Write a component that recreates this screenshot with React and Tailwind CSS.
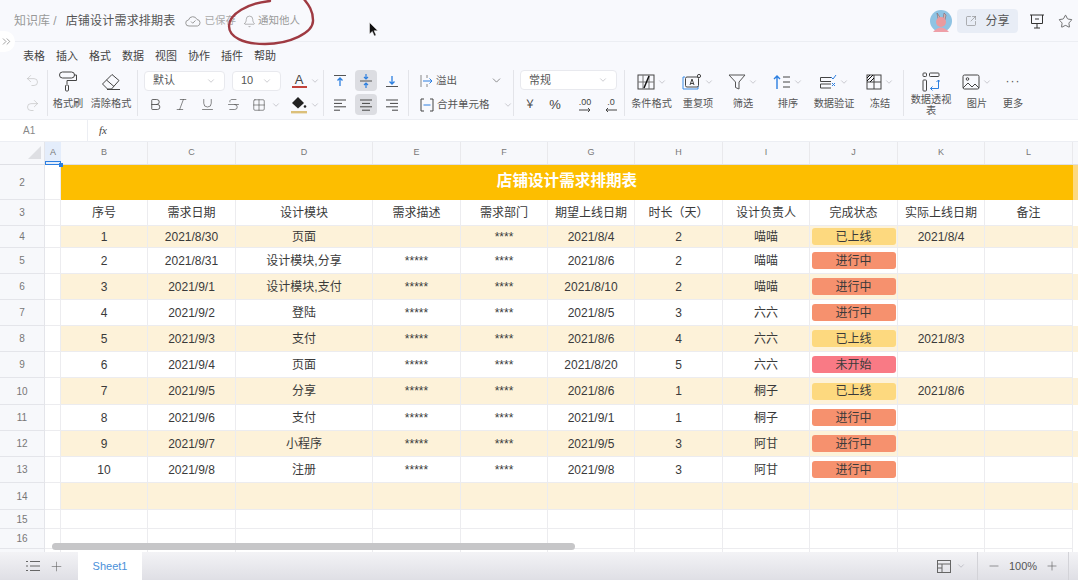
import React from "react";
import { Undo2, Redo2, Bold, Italic, Underline, Strikethrough, Grid2x2, ChevronDown, Bell, Star, Plus, Minus, ChevronsRight, SquareArrowOutUpRight } from "lucide-react";

const FONT = "[font-family:Liberation_Sans,Noto_Sans_CJK_SC,sans-serif]";
const GRID = "grid grid-cols-[45px_16px_87px_88px_137px_88px_87px_87px_88px_87px_88px_87px_88px_5px]";

const rows = [
  [4, 226, "1", "2021/8/30", "页面", "", "****", "2021/8/4", "2", "喵喵", "已上线", "2021/8/4"],
  [5, 248, "2", "2021/8/31", "设计模块,分享", "*****", "****", "2021/8/6", "2", "喵喵", "进行中", ""],
  [6, 274, "3", "2021/9/1", "设计模块,支付", "*****", "****", "2021/8/10", "2", "喵喵", "进行中", ""],
  [7, 300, "4", "2021/9/2", "登陆", "*****", "****", "2021/8/5", "3", "六六", "进行中", ""],
  [8, 326, "5", "2021/9/3", "支付", "*****", "****", "2021/8/6", "4", "六六", "已上线", "2021/8/3"],
  [9, 352, "6", "2021/9/4", "页面", "*****", "****", "2021/8/20", "5", "六六", "未开始", ""],
  [10, 378, "7", "2021/9/5", "分享", "*****", "****", "2021/8/6", "1", "桐子", "已上线", "2021/8/6"],
  [11, 405, "8", "2021/9/6", "支付", "*****", "****", "2021/9/1", "1", "桐子", "进行中", ""],
  [12, 431, "9", "2021/9/7", "小程序", "*****", "****", "2021/9/5", "3", "阿甘", "进行中", ""],
  [13, 457, "10", "2021/9/8", "注册", "*****", "****", "2021/9/8", "3", "阿甘", "进行中", ""],
];
const heights = { 4: "h-[22px]", 5: "h-[26px]", 6: "h-[26px]", 7: "h-[26px]", 8: "h-[26px]", 9: "h-[26px]", 10: "h-[27px]", 11: "h-[26px]", 12: "h-[26px]", 13: "h-[26px]" };
const badge = { "已上线": "bg-[#fdd97f]", "进行中": "bg-[#f6916e]", "未开始": "bg-[#f97a85]" };

const Cell = ({ children, bg = "" }) => (
  <div className={`flex items-center justify-center border-r border-b border-[#ececef] text-[12px] text-[#3a3a3a] overflow-hidden ${bg}`}>{children}</div>
);
const RowHead = ({ n }) => (
  <div className="flex items-center justify-center bg-[#f7f8fb] border-r border-b border-[#e4e5ea] text-[10px] text-[#777]">{n}</div>
);
const Chev = ({ className = "" }) => <ChevronDown size={10} strokeWidth={1.2} className={`text-[#9a9aa2] shrink-0 ${className}`} />;

const Svg = ({ w = 20, h = 20, children }) => (
  <svg width={w} height={h} viewBox={`0 0 ${w} ${h}`} fill="none" stroke="#444" strokeWidth="1" className="shrink-0">{children}</svg>
);

const IRoller = () => <Svg w={20} h={22}><rect x="1.5" y="1" width="15" height="6" rx="3" /><path d="M16.5 4h2v5.5H9v3.5" /><rect x="7.5" y="14" width="3" height="6" rx="1" /></Svg>;
const IEraser = () => <Svg w={20} h={20}><path d="M1.5 12 11 2.5l7 6-7.5 8.5H6.5z" /><path d="M5.5 8 13 14.5M6 17.5h13" /></Svg>;
const IFill = () => <svg width="16" height="18" viewBox="0 0 16 18" className="shrink-0"><path d="M7 1 1 7l6 5.5L13 7z" fill="#222" /><circle cx="14" cy="10.5" r="1.3" fill="#222" /><rect x="0" y="15" width="16" height="2.4" fill="#dcc07a" /></svg>;
const IAlignTop = () => <Svg w={14} h={14}><path d="M1 1.5h12" stroke="#555" /><path d="M7 12V4M4.500 6.500 7 4l2.500 2.500" stroke="#2c7fe0" strokeWidth="1.3" /></Svg>;
const IAlignMid = () => <Svg w={14} h={16}><path d="M1 8h12" stroke="#555" /><path d="M7 1v5M5 4l2 2 2-2M7 15v-5M5 12l2-2 2 2" stroke="#2c7fe0" strokeWidth="1.2" /></Svg>;
const IAlignBot = () => <Svg w={14} h={14}><path d="M1 12.5h12" stroke="#555" /><path d="M7 2v8M4.500 7.500 7 10l2.500-2.500" stroke="#2c7fe0" strokeWidth="1.3" /></Svg>;
const ILines = ({ kind }) => {
  const w = [12, 8, 12, kind === 1 ? 8 : 6];
  const x = (l) => (kind === 0 ? 1 : kind === 1 ? 7 - l / 2 : 13 - l);
  return <Svg w={14} h={14}>{w.map((l, i) => <path key={i} d={`M${x(l)} ${2 + i * 3.4}h${l}`} />)}</Svg>;
};
const IOverflow = () => <Svg w={14} h={14}><path d="M1 1v12" stroke="#888" /><path d="M7 1v3M7 10v3" stroke="#888" /><path d="M3 7h9M9.500 4.500 12 7l-2.500 2.500" stroke="#2c7fe0" /></Svg>;
const IMerge = () => <Svg w={14} h={14}><path d="M4 1H1v12h3M10 1h3v12h-3" /><path d="M3.500 7h7" stroke="#2c7fe0" /></Svg>;
const ICond = () => <Svg w={18} h={16}><rect x="1" y="1" width="16" height="14" /><path d="M1 8h16M6 1v14M12 1v14" stroke="#777" /><path d="M7 14 12 2" stroke="#111" strokeWidth="1.5" /></Svg>;
const IDup = () => <Svg w={20} h={18}><path d="M3 4H1v12h15v-3" stroke="#3b8ce6" /><rect x="3.500" y="4" width="13" height="10" rx="1.5" /><path d="m8 12 2-6 2 6M8.700 10.500h2.600" /><circle cx="17" cy="3" r="1.6" /></Svg>;
const IFunnel = () => <Svg w={18} h={18}><path d="M1 2h16l-6 7v7l-3.500-1.500V9z" stroke="#555" /></Svg>;
const ISort = () => <Svg w={18} h={16}><path d="M4 15V2M1 5l3-3 3 3" stroke="#2c7fe0" strokeWidth="1.4" /><path d="M10 3h7M10 8h7M10 13h7" /></Svg>;
const IValid = () => <Svg w={18} h={16}><path d="M12 3.500H1.500v4H12M12 10H1.500v4H12" /><path d="m12 3 2 2 3-4" stroke="#2c7fe0" /><path d="m13 9 3 3m0-3-3 3" stroke="#2c7fe0" /></Svg>;
const IFreeze = () => <Svg w={16} h={16}><rect x="1" y="1" width="14" height="14" /><path d="M1 8h14M8 1v14" /><path d="M1 7 7 1M1 4l3-3M4 8l4-4" stroke="#111" /></Svg>;
const IPivot = () => <Svg w={18} h={20}><rect x="1" y="1" width="3.500" height="3.500" rx=".8" /><rect x="7.500" y="1" width="9.500" height="3.500" rx=".8" /><rect x="1" y="8" width="3.500" height="11" rx=".8" /><path d="M16.500 8v8.500H8.500M14.500 10l2-2 2 2M10.500 14.500l-2 2 2 2" stroke="#2c7fe0" /></Svg>;
const IImage = () => <Svg w={18} h={16}><rect x="1" y="1" width="16" height="14" rx="1.5" /><circle cx="5.500" cy="5" r="1.3" /><path d="m1 14 5-5 4 4 3-3 4 4" /></Svg>;
const IBoard = () => <Svg w={16} h={16}><path d="M1 2h14M2.500 2v8.500h11V2M8 10.500V15M5 15h6M6 6h4" stroke="#333" /></Svg>;
const ISheetView = () => <Svg w={14} h={13}><rect x=".5" y=".5" width="13" height="12" stroke="#666" /><path d="M.5 4h13M5 4v8.500M.5 8h4.500" stroke="#666" /></Svg>;
const IList = () => <Svg w={14} h={12}><path d="M4 1.500h10M4 6h10M4 10.500h10" stroke="#666" /><path d="M0 1.500h2M0 6h2M0 10.500h2" stroke="#666" /></Svg>;
const ICloud = () => <Svg w={16} h={12}><path d="M4 11a3 3 0 0 1-.5-6A4.500 4.500 0 0 1 12 4.500a3.300 3.300 0 0 1 .5 6.500z" stroke="#999" /><path d="m6 6.500 1.700 1.700L10.500 5.500" stroke="#999" /></Svg>;
const IArrR = () => <svg width="14" height="6" viewBox="0 0 14 6" fill="none" stroke="#444" className="shrink-0"><path d="M1 3h11M10 1l2 2-2 2" /></svg>;
const IArrL = () => <svg width="14" height="6" viewBox="0 0 14 6" fill="none" stroke="#444" className="shrink-0"><path d="M13 3H2M4 1 2 3l2 2" /></svg>;

const Feature = ({ icon, label, width, chev = true, wrap = false }) => (
  <div className={`flex flex-col items-center h-full ${width}`}>
    <div className="flex items-center justify-center gap-[2px] h-[24px]">{icon}{chev && <Chev />}</div>
    <div className={`text-[10.2px] text-[#555] text-center ${wrap ? "leading-[11px] mt-[1px] w-[44px]" : "leading-[14px] mt-[3px]"}`}>{label}</div>
  </div>
);
const Select = ({ label, width }) => (
  <div className={`flex items-center justify-between h-[20px] px-2 bg-white border border-[#e8e9ee] rounded-[4px] text-[11px] text-[#555] ${width}`}>
    <span>{label}</span><Chev />
  </div>
);
const Ic = ({ children, w = "w-[26px]", active = false }) => (
  <div className={`flex items-center justify-center h-[21px] ${w}`}>
    <div className={`flex items-center justify-center h-[21px] w-[22px] ${active ? "bg-[#dcdde2] rounded-[4px]" : ""}`}>{children}</div>
  </div>
);

function TopBar() {
  return (
    <div className="flex items-center h-[42px] pl-[14px] pt-[1px] border-b border-[#eceef3]">
      <span className="text-[12px] text-[#999]">知识库 /</span>
      <span className="ml-[9px] text-[12px] tracking-[0.2px] text-[#555]">店铺设计需求排期表</span>
      <span className="ml-[10px] flex items-center gap-[3px] text-[10.5px] text-[#aaa]"><ICloud />已保存</span>
      <span className="ml-[7px] flex items-center gap-[2px] text-[10.5px] text-[#999]"><Bell size={13} strokeWidth={1} className="text-[#777]" />通知他人</span>
      <div className="ml-auto flex items-center">
        <svg width="22" height="22" viewBox="0 0 22 22" className="shrink-0">
          <circle cx="11" cy="11" r="11" fill="#8fc3e3" />
          <path d="M8 9 7 3l2.500 3.500L10 9zM13 9l1-6 2 2-1 5z" fill="#d8b0b0" stroke="#6f5a60" strokeWidth=".5" />
          <circle cx="11" cy="12" r="5" fill="#ea9a9e" />
          <path d="M3 22q8-9 16 0z" fill="#ee9fa8" />
        </svg>
        <div className="ml-[5px] flex items-center justify-center gap-[8px] w-[61px] h-[24px] bg-[#e8edf6] rounded-[4px] text-[12px] text-[#555]">
          <SquareArrowOutUpRight size={12} strokeWidth={1.1} className="text-[#777]" />分享
        </div>
        <div className="ml-[11px] w-[16px] flex justify-center"><IBoard /></div>
        <Star size={15} strokeWidth={1.1} className="ml-[13px] mr-[5px] text-[#333]" />
      </div>
    </div>
  );
}

function Menu() {
  return (
    <div className="flex items-center h-[26px] pl-[23px] pt-[2px] gap-[11px] text-[11px] text-[#444]">
      {["表格", "插入", "格式", "数据", "视图", "协作", "插件", "帮助"].map((m) => <span key={m}>{m}</span>)}
    </div>
  );
}

const Sep = "border-r border-[#e3e4e9] h-[46px]";

function Toolbar() {
  return (
    <div className="flex h-[52px] pt-[2px] border-b border-[#eceef3]">
      <div className={`w-[48px] pl-[21px] flex flex-col gap-[4px] ${Sep}`}>
        <Ic w="w-[22px]"><Undo2 size={15} strokeWidth={1} className="text-[#bbb]" /></Ic>
        <Ic w="w-[22px]"><Redo2 size={15} strokeWidth={1} className="text-[#bbb]" /></Ic>
      </div>
      <div className={`w-[90px] flex justify-center gap-[7px] ${Sep}`}>
        {[[<IRoller key="r" />, "格式刷", "w-[30px]"], [<IEraser key="e" />, "清除格式", "w-[42px]"]].map(([ic, t, w]) => (
          <div key={t} className={`flex flex-col items-center ${w}`}>
            <div className="h-[24px] flex items-center">{ic}</div>
            <div className="mt-[3px] text-[10.2px] leading-[14px] text-[#555] whitespace-nowrap">{t}</div>
          </div>
        ))}
      </div>
      <div className={`w-[186px] pl-[6px] ${Sep}`}>
        <div className="flex items-center h-[21px]">
          <Select label="默认" width="w-[81px]" />
          <div className="ml-[7px]"><Select label="10" width="w-[49px]" /></div>
          <div className="ml-[10px] flex flex-col items-center w-[16px]">
            <span className="text-[13px] leading-[13px] text-[#444]">A</span>
            <span className="w-[15px] h-[2px] bg-[#c2413a]" />
          </div>
          <Chev className="ml-[3px]" />
        </div>
        <div className="flex items-center h-[21px] mt-[3px] -ml-[2px]">
          <Ic><Bold size={15} strokeWidth={1.3} className="text-[#444]" /></Ic>
          <Ic><Italic size={15} strokeWidth={1} className="text-[#444]" /></Ic>
          <Ic><Underline size={15} strokeWidth={1} className="text-[#444]" /></Ic>
          <Ic><Strikethrough size={15} strokeWidth={1} className="text-[#444]" /></Ic>
          <Ic><Grid2x2 size={14} strokeWidth={1} className="text-[#444]" /></Ic>
          <Chev className="-ml-[1px]" />
          <div className="ml-[10px]"><IFill /></div>
          <Chev className="ml-[3px]" />
        </div>
      </div>
      <div className={`w-[85px] pl-[3px] ${Sep}`}>
        <div className="grid grid-cols-[26px_26px_26px] gap-y-[3px]">
          <Ic><IAlignTop /></Ic>
          <Ic active><IAlignMid /></Ic>
          <Ic><IAlignBot /></Ic>
          <Ic><ILines kind={0} /></Ic>
          <Ic active><ILines kind={1} /></Ic>
          <Ic><ILines kind={2} /></Ic>
        </div>
      </div>
      <div className={`w-[105px] pl-[11px] text-[10.5px] text-[#555] ${Sep}`}>
        <div className="flex items-center gap-[2px] h-[21px]"><IOverflow /><span>溢出</span><ChevronDown size={13} strokeWidth={1.2} className="ml-[31px] text-[#555]" /></div>
        <div className="flex items-center gap-[3px] h-[21px] mt-[3px]"><IMerge /><span className="whitespace-nowrap">合并单元格</span><Chev className="ml-[10px]" /></div>
      </div>
      <div className={`w-[111px] pl-[6px] ${Sep}`}>
        <Select label="常规" width="w-[97px]" />
        <div className="flex items-center h-[21px] mt-[4px] text-[#444]">
          <span className="w-[20px] text-center text-[11px]">￥</span>
          <span className="w-[30px] text-center text-[13px]">%</span>
          <span className="w-[30px] flex flex-col items-center text-[9px] leading-[10px]">.00<IArrR /></span>
          <span className="w-[22px] flex flex-col items-center text-[9px] leading-[10px]">.0<IArrL /></span>
        </div>
      </div>
      <div className={`w-[279px] pl-[3px] flex ${Sep}`}>
        <Feature icon={<ICond />} label="条件格式" width="w-[47px]" />
        <Feature icon={<IDup />} label="重复项" width="w-[46px]" />
        <Feature icon={<IFunnel />} label="筛选" width="w-[44px]" />
        <Feature icon={<ISort />} label="排序" width="w-[46px]" />
        <Feature icon={<IValid />} label="数据验证" width="w-[46px]" />
        <Feature icon={<IFreeze />} label="冻结" width="w-[46px]" />
      </div>
      <div className="flex pl-[3px] h-[46px]">
        <Feature icon={<IPivot />} label="数据透视表" width="w-[48px]" chev={false} wrap />
        <Feature icon={<IImage />} label="图片" width="w-[44px]" />
        <Feature icon={<span className="text-[12px] tracking-[1px] text-[#555] leading-[12px] -mt-[2px]">···</span>} label="更多" width="w-[28px]" chev={false} />
      </div>
    </div>
  );
}

function FormulaBar() {
  return (
    <div className="flex items-center h-[22px] bg-white border-b border-[#eceef3]">
      <div className="w-[88px] h-full pl-[23px] flex items-center border-r border-[#eceef3] text-[10px] text-[#888]">A1</div>
      <div className="pl-[11px] text-[11px] italic [font-family:Liberation_Serif,serif] text-[#444]">fx</div>
    </div>
  );
}

function Sheet() {
  const letters = ["B", "C", "D", "E", "F", "G", "H", "I", "J", "K", "L"];
  const heads = ["序号", "需求日期", "设计模块", "需求描述", "需求部门", "期望上线日期", "时长（天）", "设计负责人", "完成状态", "实际上线日期", "备注"];
  return (
    <div className="relative h-[410px] overflow-hidden bg-white">
      <div className={`${GRID} h-[23px] bg-[#f7f8fb] border-b border-[#dfe0e5]`}>
        <div className="flex justify-end items-start pt-[4px] pr-[3px] border-r border-[#e4e5ea]">
          <div className="w-0 h-0 border-l-[13px] border-l-transparent border-b-[13px] border-b-[#dedfe3]" />
        </div>
        <div className="flex items-center justify-center bg-[#e4edfb] text-[9px] text-[#777]">A</div>
        {letters.map((l) => (
          <div key={l} className="flex items-center justify-center border-r border-[#e9e9ec] text-[9px] text-[#777]">{l}</div>
        ))}
        <div />
      </div>
      <div className={`${GRID} h-[35px]`}>
        <RowHead n="2" />
        <Cell />
        <div className="col-span-11 flex items-center justify-center pb-[3px] bg-[#fdbe00] text-[15.6px] font-bold text-white">店铺设计需求排期表</div>
        <div className="bg-[#fdd97f]" />
      </div>
      <div className={`${GRID} h-[26px]`}>
        <RowHead n="3" />
        <Cell />
        {heads.map((h) => <Cell key={h}>{h}</Cell>)}
        <div />
      </div>
      {rows.map((r) => {
        const stripe = r[0] % 2 === 0 ? "bg-[#fdf2d9]" : "";
        return (
          <div key={r[0]} className={`${GRID} ${heights[r[0]]}`}>
            <RowHead n={r[0]} />
            <Cell />
            {r.slice(2, 10).map((v, i) => <Cell key={i} bg={stripe}>{v}</Cell>)}
            <Cell bg={stripe}>
              <span className={`flex items-center justify-center w-[84px] h-[17px] rounded-[3px] ${badge[r[10]]}`}>{r[10]}</span>
            </Cell>
            <Cell bg={stripe}>{r[11]}</Cell>
            <Cell bg={stripe} />
            <div className={stripe} />
          </div>
        );
      })}
      <div className={`${GRID} h-[27px]`}>
        <RowHead n="14" />
        <Cell />
        {letters.map((l) => <Cell key={l} bg="bg-[#fdf2d9]" />)}
        <div className="bg-[#fdf2d9]" />
      </div>
      {[["15", "h-[19px]"], ["16", "h-[20px]"], ["", "h-[10px]"]].map(([n, h]) => (
        <div key={h} className={`${GRID} ${h}`}>
          <RowHead n={n} />
          <Cell />
          {letters.map((l) => <Cell key={l} />)}
          <div />
        </div>
      ))}
      <div className="absolute left-[45px] top-[19px] w-[16px] h-[4px] border border-[#2c7fe0]" />
      <div className="absolute left-[59px] top-[21px] w-[4px] h-[4px] bg-[#2c7fe0]" />
      <div className="absolute left-[52px] top-[401px] w-[523px] h-[7px] rounded-full bg-[#c6c6c8]" />
    </div>
  );
}

function Footer() {
  return (
    <div className="flex items-stretch h-[28px] bg-gradient-to-b from-[#f3f3f6] to-[#dfdfe5] text-[#666]">
      <div className="w-[78px] flex items-center pl-[26px] gap-[9px]">
        <IList />
        <Plus size={15} strokeWidth={1} />
      </div>
      <div className="w-[64px] flex items-center justify-center bg-white text-[11px] text-[#4a90d9]">Sheet1</div>
      <div className="ml-auto flex items-center">
        <ISheetView />
        <Chev className="ml-[5px]" />
        <div className="ml-[11px] h-full border-l border-[#d3d3d8]" />
        <div className="w-[90px] flex items-center justify-center gap-[8px] text-[11px] text-[#555]">
          <Minus size={14} strokeWidth={1} />100%<Plus size={14} strokeWidth={1} />
        </div>
        <div className="h-full border-l border-[#d3d3d8] mr-[9px]" />
      </div>
    </div>
  );
}

export default function App() {
  return (
    <div className={`relative w-[1078px] h-[580px] overflow-hidden bg-[#f8f9fd] ${FONT}`}>
      <TopBar />
      <Menu />
      <Toolbar />
      <FormulaBar />
      <Sheet />
      <Footer />
      <div className="absolute left-0 top-[31px] w-[15px] h-[21px] bg-white rounded-r-full flex items-center text-[#555]">
        <ChevronsRight size={13} strokeWidth={1} />
      </div>
      <svg className="absolute left-[220px] top-0" width="100" height="50" viewBox="0 0 100 50" fill="none">
        <path d="M50 1C28 3 9 14 9 26c0 11 14 18 36 18 24 0 49-11 48-24C93 11 89 5 83 -2" stroke="#9f3a42" strokeWidth="2.4" strokeLinecap="round" />
      </svg>
      <svg className="absolute left-[369px] top-[22px]" width="10" height="15" viewBox="0 0 10 15">
        <path d="M0.500 0.500v11.500l2.800-2.600 2 4.600 1.800-.8-2-4.500h3.700z" fill="#111" stroke="#fff" strokeWidth=".5" />
      </svg>
    </div>
  );
}
